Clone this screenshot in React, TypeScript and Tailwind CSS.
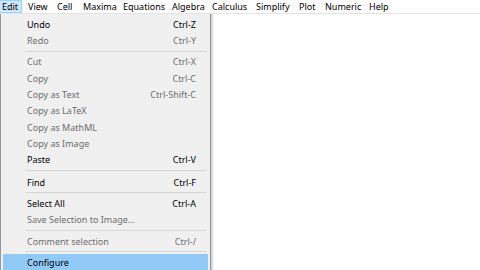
const menubar: { label: string; w: number }[] = [
  { label: 'View', w: 29 },
  { label: 'Cell', w: 26 },
  { label: 'Maxima', w: 40 },
  { label: 'Equations', w: 49 },
  { label: 'Algebra', w: 40 },
  { label: 'Calculus', w: 44 },
  { label: 'Simplify', w: 43 },
  { label: 'Plot', w: 26 },
  { label: 'Numeric', w: 44 },
  { label: 'Help', w: 30 },
]

type Item = { label: string; key?: string; on?: boolean; sel?: boolean } | 'sep' | 'sep6'

const items: Item[] = [
  { label: 'Undo', key: 'Ctrl-Z', on: true },
  { label: 'Redo', key: 'Ctrl-Y' },
  'sep',
  { label: 'Cut', key: 'Ctrl-X' },
  { label: 'Copy', key: 'Ctrl-C' },
  { label: 'Copy as Text', key: 'Ctrl-Shift-C' },
  { label: 'Copy as LaTeX' },
  { label: 'Copy as MathML' },
  { label: 'Copy as Image' },
  { label: 'Paste', key: 'Ctrl-V', on: true },
  'sep6',
  { label: 'Find', key: 'Ctrl-F', on: true },
  'sep',
  { label: 'Select All', key: 'Ctrl-A', on: true },
  { label: 'Save Selection to Image...' },
  'sep',
  { label: 'Comment selection', key: 'Ctrl-/' },
  'sep',
  { label: 'Configure', on: true, sel: true },
]

export default function App() {
  return (
    <div
      className="relative w-[480px] h-[270px] overflow-hidden bg-white text-[9px] leading-none text-black"
      style={{ fontFamily: '"Noto Sans", "Open Sans", sans-serif' }}
    >
      {/* ── Menu bar ───────────────────────────── */}
      <div className="flex h-[14px] border-b border-[#e3e3e3] bg-white">
        <div className="w-[22px] h-[13px] flex items-center pl-[2px] bg-[#cce8ff] border border-l-0 border-[#99d1ff]">
          Edit
        </div>
        <div className="w-[6px]" />
        {menubar.map(m => (
          <div key={m.label} className="h-[13px] flex items-center shrink-0" style={{ width: m.w }}>
            {m.label}
          </div>
        ))}
      </div>

      {/* ── Edit dropdown ──────────────────────── */}
      <div className="absolute left-0 top-[14px] w-[214px] h-[260px] flex">
        <div className="w-[211px] bg-[#f0f0f0] border-l border-r border-[#979797] pt-[2px] pl-[2px] pr-[2px]">
          {items.map((it, i) => {
            if (it === 'sep' || it === 'sep6') {
              return (
                <div key={i} className={`${it === 'sep6' ? 'h-[6px]' : 'h-[5px]'} flex items-center pl-[22px] pr-[1px]`}>
                  <div className="h-px w-full bg-[#d7d7d7]" />
                </div>
              )
            }
            return (
              <div
                key={i}
                className={`h-[16.33px] flex items-center justify-between pl-[24px] pr-[12px] ${
                  it.sel ? 'bg-[#91c9f7]' : ''
                } ${it.on ? 'text-black' : 'text-[#6d6d6d]'}`}
              >
                <span>{it.label}</span>
                {it.key && <span>{it.key}</span>}
              </div>
            )
          })}
        </div>
        <div className="w-[3px] bg-gradient-to-r from-[#c8c8c8] to-white" />
      </div>
    </div>
  )
}
